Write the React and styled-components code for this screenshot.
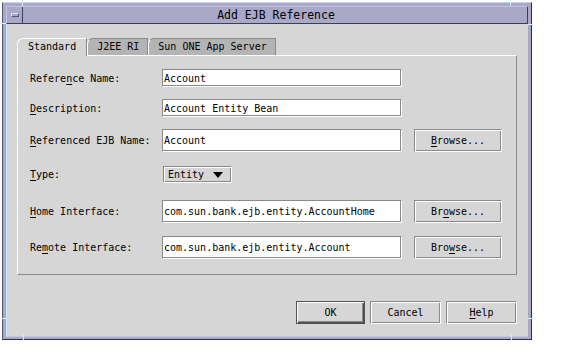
import React from 'react';
import styled, { createGlobalStyle } from 'styled-components';

const Global = createGlobalStyle`
  body {
    margin: 0;
    background: #ffffff;
    font-family: "DejaVu Sans Mono", "Liberation Mono", monospace;
    font-size: 10px;
    color: #000;
  }
`;

const Window = styled.div`
  position: relative;
  box-sizing: border-box;
  margin: 2px 0 0 2px;
  width: 530px;
  height: 338px;
  display: flex;
  flex-direction: column;
  background: #a9a9c7;
  border: 1px solid;
  border-color: #c8d4ec #2e2e4a #2e2e4a #55557a;
  padding: 3px 3px 2px 3px;
`;

const Notch = styled.span`
  position: absolute;
  background: #d8eef4;
  width: ${p => (p.$v ? '1px' : '6px')};
  height: ${p => (p.$v ? '6px' : '1px')};
`;

const TitleBar = styled.div`
  box-sizing: border-box;
  height: 18px;
  display: flex;
  align-items: stretch;
  background: #a9a9c7;
  border: 1px solid;
  border-color: #c4c4e0 #3c3c5c #3c3c5c #c4c4e0;
`;

const MenuButton = styled.div`
  box-sizing: border-box;
  width: 16px;
  display: flex;
  align-items: center;
  justify-content: center;
  border-right: 1px solid #3c3c5c;
  &::after {
    content: '';
    width: 6px;
    height: 2px;
    border: 1px solid #e0e0f4;
    border-right-color: #55557a;
    border-bottom-color: #55557a;
  }
`;

const Title = styled.div`
  flex: 1;
  text-align: center;
  font-size: 11.5px;
  line-height: 16px;
  padding-left: 2px;
`;

const Body = styled.div`
  flex: 1;
  background: #d6d6d6;
  border-left: 1px solid #c8f0f4;
  border-bottom: 1px solid #c8c8e4;
  padding: 14px 11px 0 10px;
  display: flex;
  flex-direction: column;
`;

const TabStrip = styled.div`
  display: flex;
  height: 17px;
  position: relative;
  z-index: 1;
`;

const Tab = styled.div`
  box-sizing: border-box;
  height: ${p => (p.$active ? '18px' : '17px')};
  padding: 0 ${p => (p.$active ? '10px' : '8px')} 0 ${p => (p.$active ? '10px' : '9px')};
  line-height: 16px;
  background: ${p => (p.$active ? '#d6d6d6' : '#b4b4b4')};
  border: 1px solid;
  border-bottom: none;
  border-color: ${p => (p.$active ? '#ffffff #8a8a8a #8a8a8a #ffffff' : '#8a8a8a #8a8a8a #8a8a8a #ffffff')};
  border-top-left-radius: 6px;
`;

const Panel = styled.div`
  box-sizing: border-box;
  height: 220px;
  border: 1px solid;
  border-color: #ffffff #8a8a8a #8a8a8a #ffffff;
  padding: 13px 0 0 12px;
  display: flex;
  flex-direction: column;
`;

const Row = styled.div`
  display: flex;
  align-items: stretch;
  height: ${p => p.$h}px;
  margin-top: ${p => p.$mt || 0}px;
`;

const Label = styled.div`
  width: 132px;
  display: flex;
  align-items: center;
  white-space: pre;
`;

const Mn = styled.span`
  text-decoration: underline;
  text-underline-offset: 2px;
`;

const etched = `
  box-sizing: border-box;
  border: 1px solid;
  border-color: #8a8a8a #ffffff #ffffff #8a8a8a;
  box-shadow: inset 1px 1px 0 #ffffff, inset -1px -1px 0 #8a8a8a;
`;

const Field = styled.div`
  ${etched}
  box-shadow: inset -1px -1px 0 #8a8a8a;
  width: 240px;
  background: #ffffff;
  display: flex;
  align-items: center;
  padding-left: 1px;
  white-space: pre;
`;

const Combo = styled.div`
  ${etched}
  width: 69px;
  margin-left: 1px;
  display: flex;
  align-items: center;
  justify-content: space-between;
  padding: 0 8px 0 4px;
  &::after {
    content: '';
    width: 0;
    height: 0;
    border-left: 5px solid transparent;
    border-right: 5px solid transparent;
    border-top: 6px solid #000;
  }
`;

const Button = styled.div`
  ${etched}
  width: ${p => p.$w}px;
  display: flex;
  align-items: center;
  justify-content: center;
  white-space: pre;
  ${p => p.$default && `
    border-color: #505050 #ffffff #ffffff #505050;
    outline: 1px solid #505050;
    outline-offset: -1px;
    box-shadow: inset 1px 1px 0 #ffffff, inset -1px -1px 0 #505050, inset -2px -2px 0 #8a8a8a;
  `}
`;

const BrowseButton = styled(Button)`
  margin-left: 12px;
`;

const ButtonRow = styled.div`
  display: flex;
  justify-content: flex-end;
  gap: 5px;
  height: 23px;
  margin-top: 26px;
`;

const rows = [
  { h: 18, mt: 0, label: <>Refere<Mn>n</Mn>ce Name:</>, value: 'Account' },
  { h: 18, mt: 12, label: <><Mn>D</Mn>escription:</>, value: 'Account Entity Bean' },
  { h: 23, mt: 12, label: <><Mn>R</Mn>eferenced EJB Name:</>, value: 'Account', browse: <><Mn>B</Mn>rowse...</> },
  { h: 17, mt: 14, label: <><Mn>T</Mn>ype:</>, combo: 'Entity' },
  { h: 23, mt: 17, label: <><Mn>H</Mn>ome Interface:</>, value: 'com.sun.bank.ejb.entity.AccountHome', browse: <>Br<Mn>o</Mn>wse...</> },
  { h: 23, mt: 13, label: <>Re<Mn>m</Mn>ote Interface:</>, value: 'com.sun.bank.ejb.entity.Account', browse: <>Bro<Mn>w</Mn>se...</> },
];

export default function App() {
  return (
    <>
      <Global />
      <Window>
        <Notch $v style={{ left: 19, top: -3 }} />
        <Notch style={{ left: -3, top: 20 }} />
        <Notch $v style={{ right: 20, top: -3 }} />
        <Notch style={{ right: -3, top: 21 }} />
        <Notch style={{ left: -3, bottom: 20 }} />
        <Notch $v style={{ left: 20, bottom: -1 }} />
        <Notch style={{ right: -3, bottom: 20 }} />
        <Notch $v style={{ right: 19, bottom: -1 }} />
        <TitleBar>
          <MenuButton />
          <Title>Add EJB Reference</Title>
        </TitleBar>
        <Body>
          <TabStrip>
            <Tab $active>Standard</Tab>
            <Tab>J2EE RI</Tab>
            <Tab>Sun ONE App Server</Tab>
          </TabStrip>
          <Panel>
            {rows.map((r, i) => (
              <Row key={i} $h={r.h} $mt={r.mt}>
                <Label>{r.label}</Label>
                {r.combo ? <Combo>{r.combo}</Combo> : <Field>{r.value}</Field>}
                {r.browse && <BrowseButton $w={88}>{r.browse}</BrowseButton>}
              </Row>
            ))}
          </Panel>
          <ButtonRow>
            <Button $w={69} $default>OK</Button>
            <Button $w={71}>Cancel</Button>
            <Button $w={71}><Mn>H</Mn>elp</Button>
          </ButtonRow>
        </Body>
      </Window>
    </>
  );
}
